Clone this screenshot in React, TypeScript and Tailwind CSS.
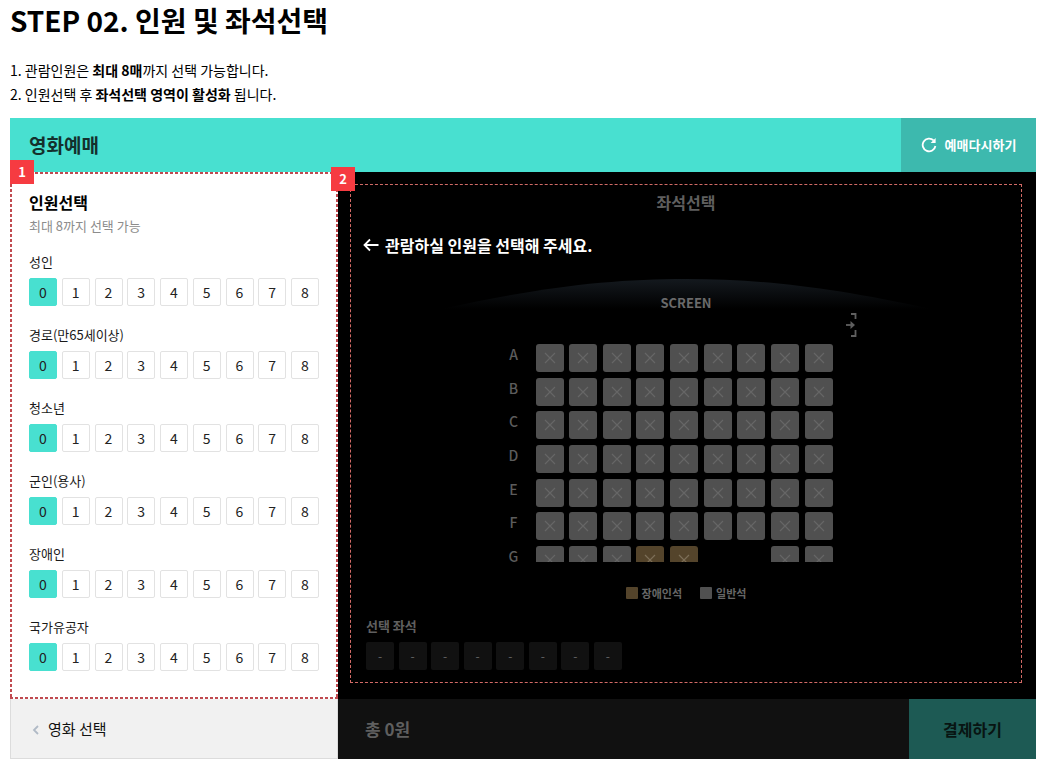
import React, { useState } from 'react';

const visitorTypes = ['성인', '경로(만65세이상)', '청소년', '군인(용사)', '장애인', '국가유공자'];
const counts = [0, 1, 2, 3, 4, 5, 6, 7, 8];

// n = normal seat, w = wheelchair seat, - = no seat
const seatRows = [
  { name: 'A', seats: 'nnnnnnnnn' },
  { name: 'B', seats: 'nnnnnnnnn' },
  { name: 'C', seats: 'nnnnnnnnn' },
  { name: 'D', seats: 'nnnnnnnnn' },
  { name: 'E', seats: 'nnnnnnnnn' },
  { name: 'F', seats: 'nnnnnnnnn' },
  { name: 'G', seats: 'nnnww--nn' },
];

function StepBadge({ children }) {
  return (
    <span className="flex h-6 w-6 items-center justify-center bg-[#f63b41] text-[13px] font-bold text-white">
      {children}
    </span>
  );
}

function Seat({ type }) {
  if (type === '-') {
    return <span className="h-7 w-7" />;
  }
  return (
    <button
      aria-label="선택 불가 좌석"
      className={`flex h-7 w-7 items-center justify-center rounded-[3px] ${
        type === 'w' ? 'bg-[#54442b] text-[#7d6f58]' : 'bg-[#505050] text-[#666]'
      }`}
    >
      <svg className="h-3 w-3" viewBox="0 0 12 12" fill="none" stroke="currentColor" strokeWidth="1.2">
        <path d="M1 1l10 10M11 1L1 11" />
      </svg>
    </button>
  );
}

function VisitorPicker({ label }) {
  const [selected, setSelected] = useState(0);

  return (
    <div className="mb-[21px]" role="group" aria-label={label}>
      <p className="mb-2 text-[13px] leading-4 text-[#1a1a1a]">{label}</p>
      <div className="flex justify-between">
        {counts.map(count => (
          <button
            key={count}
            onClick={() => setSelected(count)}
            className={`h-7 w-7 rounded-[2px] border text-sm leading-5 text-[#222] ${
              selected === count ? 'border-[#48e0d0] bg-[#48e0d0]' : 'border-[#e2e2e2] bg-white'
            }`}
          >
            {count}
          </button>
        ))}
      </div>
    </div>
  );
}

function SeatMap() {
  return (
    <div className="mt-[7px] flex h-[218px] justify-center gap-4 pr-8">
      <div className="flex h-[230px] w-3 flex-col justify-between">
        {seatRows.map(row => (
          <span key={row.name} className="h-7 text-center text-sm leading-5 font-medium text-[#5c5c5c]">
            {row.name}
          </span>
        ))}
      </div>
      <div className="w-[297px] overflow-hidden">
        <div className="flex h-[230px] flex-col justify-between">
          {seatRows.map(row => (
            <div key={row.name} className="flex justify-between">
              {row.seats.split('').map((type, i) => (
                <Seat key={i} type={type} />
              ))}
            </div>
          ))}
        </div>
      </div>
    </div>
  );
}

function App() {
  return (
    <div className="bg-white pr-[9px] pl-[10px] font-['Noto_Sans_CJK_KR',sans-serif] text-black">
      <h1 className="text-[28px] leading-10 font-bold">STEP 02. 인원 및 좌석선택</h1>
      <ol className="mt-[18px] text-sm leading-6">
        <li>1. 관람인원은 <b>최대 8매</b>까지 선택 가능합니다.</li>
        <li>2. 인원선택 후 <b>좌석선택 영역이 활성화</b> 됩니다.</li>
      </ol>

      <header className="mt-3 flex h-[54px] items-stretch justify-between bg-[#48e0d0]">
        <h2 className="flex items-center pl-[19px] text-[19px] leading-6 font-bold text-[#14302d]">영화예매</h2>
        <button className="flex w-[135px] items-center justify-center gap-2 bg-[#3db9ae] text-[13px] font-bold text-white">
          <svg className="h-4 w-4" viewBox="0 0 16 16" fill="none" stroke="currentColor" strokeWidth="1.8">
            <path d="M12.6 3.4A6.4 6.4 0 1 0 14.4 9" />
            <path d="M14.6 1v5h-5z" fill="currentColor" stroke="none" />
          </svg>
          예매다시하기
        </button>
      </header>

      <div className="flex">
        <section className="relative w-[328px] shrink-0 px-[19px] pt-[18px]">
          {/* guide outline, half of the stroke is clipped by the svg edge */}
          <svg className="pointer-events-none absolute inset-0 h-full w-full">
            <rect width="100%" height="100%" fill="none" stroke="#c04a50" strokeWidth="4" strokeDasharray="3 2" />
          </svg>
          <div className="absolute -top-3 left-0">
            <StepBadge>1</StepBadge>
          </div>
          <h3 className="text-base leading-6 font-bold">인원선택</h3>
          <p className="mb-4 text-[13px] leading-6 text-[#8c8c8c]">최대 8까지 선택 가능</p>
          {visitorTypes.map(label => (
            <VisitorPicker key={label} label={label} />
          ))}
        </section>

        <section className="relative flex-1 bg-black pt-3 pr-[14px] pb-4 pl-3">
          <div className="absolute -top-[5px] -left-[7px]">
            <StepBadge>2</StepBadge>
          </div>
          <div className="h-[499px] border border-dashed border-[#d26a66]">
            <h3 className="mt-[5px] text-center text-base leading-6 font-bold text-[#5f5f5f]">좌석선택</h3>
            <p className="mt-[19px] flex items-center gap-1.5 pl-3 text-base leading-6 font-bold text-white">
              <svg className="h-4 w-4" viewBox="0 0 16 16" fill="none" stroke="currentColor" strokeWidth="1.8">
                <path d="M15.5 8H2M7 2.5L1.5 8 7 13.5" />
              </svg>
              관람하실 인원을 선택해 주세요.
            </p>

            <div className="relative mx-auto mt-[22px] h-[30px] w-[490px]">
              <svg className="h-full w-full" viewBox="0 0 490 30" preserveAspectRatio="none">
                <defs>
                  <linearGradient id="screen" x2="0" y2="1">
                    <stop offset="0" stopColor="#14191e" />
                    <stop offset="1" stopColor="#000" />
                  </linearGradient>
                </defs>
                <path d="M0 30C100 8 170 0 245 0S390 8 490 30z" fill="url(#screen)" />
              </svg>
              <span className="absolute inset-x-0 top-3.5 text-center text-[13px] leading-5 font-bold text-[#6a6a6a]">
                SCREEN
              </span>
            </div>
            <div className="flex justify-end pt-1 pr-[164px]">
              <svg className="h-6 w-3" viewBox="0 0 12 24" fill="none" stroke="#5f5f5f" strokeWidth="1.8">
                <path d="M6 1h4.5v5M6 23h4.5v-6" />
                <path d="M1 12h5" />
                <path d="M5.5 8l4.5 4-4.5 4z" fill="#5f5f5f" stroke="none" />
              </svg>
            </div>
            <SeatMap />

            <div className="mt-[21px] flex justify-center gap-[18px] text-[11px] leading-5 font-bold text-[#666]">
              <span className="flex items-center gap-1"><i className="h-3 w-3 rounded-[1px] bg-[#54442b]" />장애인석</span>
              <span className="flex items-center gap-1"><i className="h-3 w-3 rounded-[1px] bg-[#505050]" />일반석</span>
            </div>

            <div className="mt-[13px] pl-[15px]">
              <p className="text-[13px] leading-5 font-bold text-[#5f5f5f]">선택 좌석</p>
              <div className="mt-1.5 flex w-[256px] justify-between">
                {counts.slice(1).map(n => (
                  <span key={n} className="flex h-7 w-7 items-center justify-center rounded-[2px] bg-[#111] text-xs text-[#666]">
                    -
                  </span>
                ))}
              </div>
            </div>
          </div>
        </section>
      </div>

      <footer className="flex h-[60px]">
        <button className="flex w-[328px] shrink-0 items-center gap-2 border border-t-0 border-[#dcdcdc] bg-[#f1f1f1] pt-0.5 pl-[21px] text-[15px] text-[#111]">
          <svg className="h-2.5 w-2" viewBox="0 0 8 10" fill="none" stroke="#b0bac6" strokeWidth="1.8">
            <path d="M6 1L2 5l4 4" />
          </svg>
          영화 선택
        </button>
        <p className="flex flex-1 items-center bg-[#111] pl-[27px] text-[17px] font-bold text-[#5f5f5f]">총 0원</p>
        <button className="w-[127px] bg-[#1d5a54] text-base font-bold text-[#081412]">결제하기</button>
      </footer>
    </div>
  );
}

export default App;
